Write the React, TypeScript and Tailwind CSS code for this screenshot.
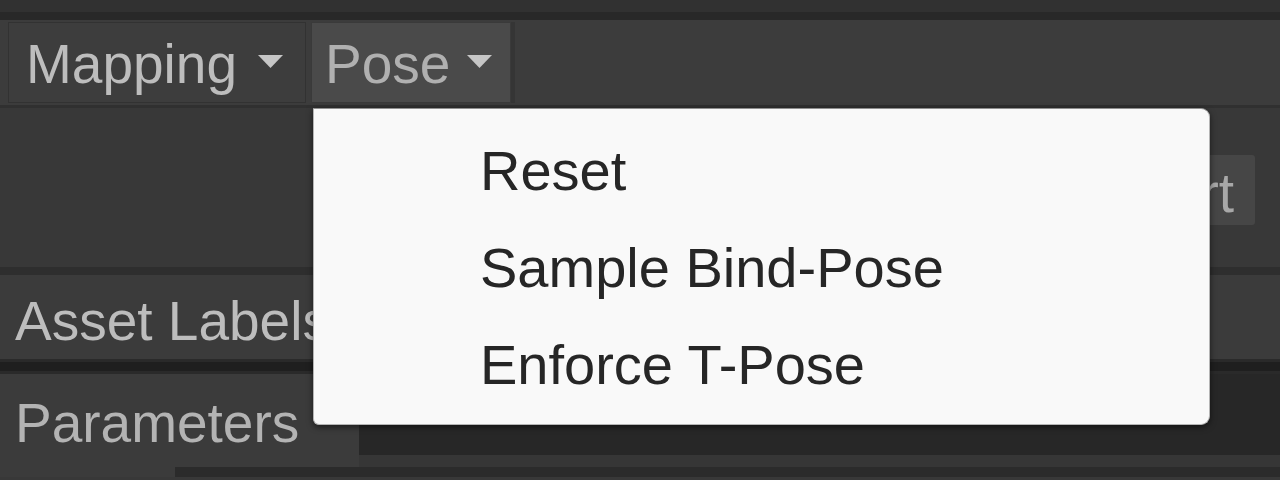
import React from "react";

const Caret = () => (
  <svg width="27" height="15" viewBox="0 0 27 15" className="shrink-0">
    <path d="M1 1 L26 1 L13.5 14 Z" fill="#c6c6c6" />
  </svg>
);

const menuItems = ["Reset", "Sample Bind-Pose", "Enforce T-Pose"];

const App: React.FC = () => {
  return (
    <div className="relative w-[1280px] h-[480px] overflow-hidden bg-[#383838] font-['Liberation_Sans',Arial,sans-serif] text-[#bdbdbd]">
      <div className="h-[12px] bg-[#313131]" />
      <div className="h-[8px] bg-[#282828]" />

      {/* toolbar */}
      <div className="h-[88px] flex items-stretch bg-[#3c3c3c] pl-[8px] pt-[2px] pb-[2px] border-b-[3px] border-[#303030]">
        <div className="w-[298px] flex items-center pl-[17px] pt-[4px] bg-[#3d3d3d] border border-[#323232]">
          <span className="text-[55px] leading-none">Mapping</span>
          <span className="ml-[20px] -mt-[6px]"><Caret /></span>
        </div>
        <div className="w-[200px] ml-[5px] flex items-center pl-[13px] pt-[4px] bg-[#4a4a4a] border border-[#3a3a3a]">
          <span className="text-[55px] leading-none text-[#b0b0b0]">Pose</span>
          <span className="ml-[16px] -mt-[6px]"><Caret /></span>
        </div>
        <div className="flex-1 border-l-[4px] border-[#353535]" />
      </div>

      {/* main area */}
      <div className="h-[159px] flex justify-end items-start pt-[47px] pr-[25px]">
        <div className="h-[70px] flex items-center pl-[23px] pr-[21px] pt-[6px] bg-[#464646] rounded-[3px] text-[55px] leading-none text-[#a8a8a8]">
          Revert
        </div>
      </div>

      <div className="h-[8px] bg-[#2e2e2e]" />
      <div className="h-[84px] flex items-center pl-[15px] pt-[8px] bg-[#3b3b3b]">
        <span className="text-[55px] leading-none">Asset Labels</span>
      </div>
      <div className="h-[15px] bg-[#1f1f1f] border-y-[3px] border-[#2a2a2a]" />

      <div className="h-[93px] flex">
        <div className="w-[359px] flex items-center pl-[15px] pt-[6px] bg-[#3b3b3b]">
          <span className="text-[55px] leading-none text-[#b3b3b3]">Parameters</span>
        </div>
        <div className="flex-1 flex flex-col">
          <div className="flex-1 bg-[#272727]" />
          <div className="h-[12px] bg-[#363636]" />
        </div>
      </div>
      <div className="h-[10px] flex">
        <div className="w-[175px] bg-[#3b3b3b]" />
        <div className="flex-1 bg-[#2b2b2b]" />
      </div>

      {/* pose dropdown menu */}
      <div className="absolute left-[313px] top-[108px] w-[897px] h-[317px] bg-[#f9f9f9] border border-[#b5b5b5] border-t-[#8f8f8f] rounded-tr-[9px] rounded-br-[9px] rounded-bl-[6px] shadow-[0_2px_6px_rgba(0,0,0,0.55)] pl-[166px] pt-[13px]">
        {menuItems.map((item) => (
          <div key={item} className="h-[97px] leading-[97px] text-[56px] text-[#262626] whitespace-nowrap">
            {item}
          </div>
        ))}
      </div>
    </div>
  );
};

export default App;
